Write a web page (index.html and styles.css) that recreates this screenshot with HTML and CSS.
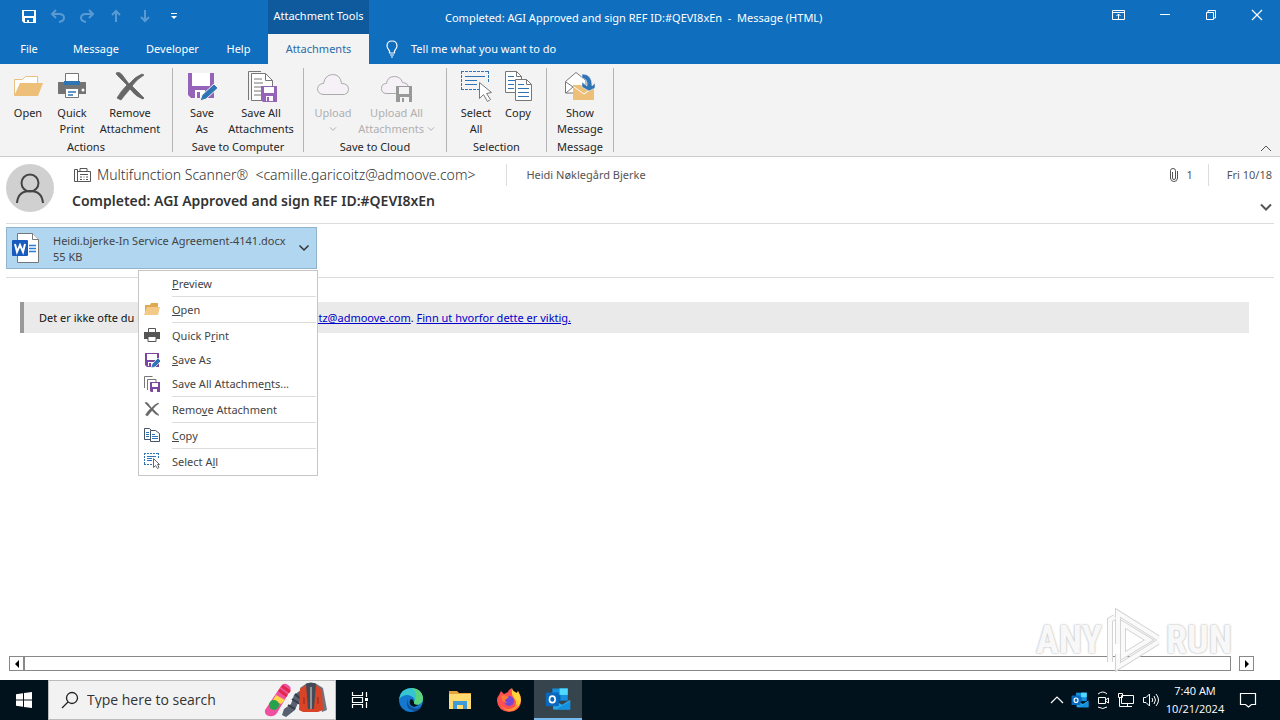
FILE: index.html
```html
<!DOCTYPE html>
<html lang="en">
<head>
<meta charset="utf-8">
<title>Completed: AGI Approved and sign REF ID:#QEVI8xEn - Message (HTML)</title>
<link rel="stylesheet" href="styles.css">
</head>
<body>
<svg class="sprite" aria-hidden="true">
  <symbol id="folder" viewBox="0 0 32 32"><path d="M2.500 25V9.500h8l3-3h12V15" fill="#fff" stroke="#e8c080"/><path d="M2 26l6-13h23l-5 13z" fill="#eebf78"/></symbol>
  <symbol id="folderfull" viewBox="0 0 16 16"><path d="M1 14V4h5l1-2h7v12z" fill="#e0a850"/><path d="M0 14l3-8h13l-2 8z" fill="#f3c987"/></symbol>
  <symbol id="printer" viewBox="0 0 32 32"><path d="M9.500 13V3.500h13V13" fill="#fff" stroke="#777"/><path d="M2 12h28v12H2z" fill="#737373"/><path d="M8 11h16v4H8z" fill="#2f74b5"/><circle cx="27" cy="20" r="1.500" fill="#fff"/><path d="M9.500 18.500h13v9h-13z" fill="#fff" stroke="#777"/><path d="M12 22h8M12 25h5" stroke="#2f74b5" stroke-width="1.500"/></symbol>
  <symbol id="cross" viewBox="0 0 32 32"><path d="M2 3q4-2 7 3l6 8q7-8 13-10l2 1q-7 4-12 11l12 12-1 1q-7-2-13-10-6 7-9 11l-4-2q4-7 10-13L3 5z" fill="#666" stroke="#666" stroke-width=".8"/></symbol>
  <symbol id="saveas" viewBox="0 0 32 32"><path d="M2 3h26v25H5l-3-3z" fill="#9563b8"/><path d="M6 3h18v13H6zM9 20h10v8H9z" fill="#fff"/><path d="M11 22h3v6h-3z" fill="#9563b8"/><path d="M14 31l2-6 12-11 4 4-12 11z" fill="#2f74b5" stroke="#f4f4f4"/></symbol>
  <symbol id="saveall" viewBox="0 0 32 32"><path d="M3.500 30V1.500H16" fill="none" stroke="#777"/><path d="M6.500 30.500v-27h14l7 7v20z" fill="#fff" stroke="#777"/><path d="M20.500 3.500v7h7M9 9h8M9 13h9M9 17h7M9 21h7M9 25h7" fill="none" stroke="#777"/><path d="M16 16h16v16H18l-2-2z" fill="#9563b8"/><path d="M19 17h10v6H19zM21 26h7v5h-7z" fill="#fff"/><path d="M22 27h2v4h-2z" fill="#9563b8"/></symbol>
  <symbol id="cloud" viewBox="0 0 32 32"><path d="M6 24.500q-5.500-1-5.500-6 1-5 6-5Q8 5 15.500 4.500q8 0 9 9 7 0 7 6 0 4-4 5z" fill="#f6f1f6" stroke="#aaa"/></symbol>
  <symbol id="clouddisk" viewBox="0 0 32 32"><path d="M15 23.500H5Q.500 23 .500 18.500q0-5 5-5 1-7 8-7 6 0 8 6 5 0 6 4" fill="#f6f1f6" stroke="#aaa"/><path d="M15 16h16v16H15z" fill="#999"/><path d="M18 17h10v7H18zM19 27h9v5h-9z" fill="#f4f4f4"/><path d="M21 28h2v4h-2z" fill="#999"/></symbol>
  <symbol id="selectall" viewBox="0 0 32 32"><path d="M1 1.500h28M1 19.500h18M1.500 1v19M28.500 1v12" fill="none" stroke="#2f74b5" stroke-dasharray="3 1"/><path d="M5 6.500h20M5 10.500h12M5 14.500h12" stroke="#2f74b5"/><path d="M19.500 12.500v16l4-4 4 7 3-2-4-6 5-1z" fill="#fff" stroke="#777"/></symbol>
  <symbol id="copy" viewBox="0 0 32 32"><path d="M3.500 1.500h11l5 5v16h-16z" fill="#fff" stroke="#777"/><path d="M14.500 1.500v5h5" fill="none" stroke="#777"/><path d="M6 6.500h6M6 10.500h7M6 14.500h6M6 18.500h6" stroke="#2f74b5"/><path d="M13.500 9.500h11l5 5v16h-16z" fill="#fff" stroke="#777"/><path d="M24.500 9.500v5h5" fill="none" stroke="#777"/><path d="M16 14.500h6M16 18.500h11M16 22.500h11M16 26.500h11" stroke="#2f74b5"/></symbol>
  <symbol id="envelope" viewBox="0 0 32 32"><path d="M1.500 23V11.500L12 2.500l10 8V23z" fill="#fff" stroke="#777"/><path d="M2 12l7 5M2 23l8-7" stroke="#777"/><path d="M9 15h21v15H9z" fill="#eebf78"/><path d="M10 17l10 7 10-7" fill="none" stroke="#fff"/><path d="M18 4q10 0 10 12l3-3v5l-6 3-7-4v-5l5 4Q24 9 18 8z" fill="#2f74b5" stroke="#f4f4f4" stroke-width=".5"/></symbol>
  <symbol id="chev" viewBox="0 0 12 12"><path d="M1.500 3.500L6 8l4.500-4.500" fill="none" stroke="currentColor" stroke-width="1.500"/></symbol>
  <symbol id="undo" viewBox="0 0 16 16"><path d="M6 2L2 6l4 4M2 6h7q5 0 5 4 0 3-5 4" fill="none" stroke="currentColor" stroke-width="2"/></symbol>
  <symbol id="arrow" viewBox="0 0 16 16"><path d="M8 14V3M4 7l4-4 4 4" fill="none" stroke="currentColor" stroke-width="2"/></symbol>
  <symbol id="outlook" viewBox="0 0 32 32"><path d="M9 3h19v15H9z" fill="#1490df"/><path d="M18 3h10v8H18z" fill="#50d9ff"/><path d="M9 11h10v8H9z" fill="#0364b8"/><path d="M10 17l11 6 10-6v12H10z" fill="#28a8ea"/><path d="M13 29l18-10v10z" fill="#1490df"/><rect x="1" y="8" width="16" height="17" rx="1" fill="#0a68bd"/><ellipse cx="9" cy="16.500" rx="3.500" ry="4" fill="none" stroke="#fff" stroke-width="2"/></symbol>
</svg>

<header class="top">
  <div class="titlebar">
    <div class="quick">
      <button class="plain" aria-label="Save"><svg width="16" height="16" viewBox="0 0 16 16"><path d="M1 2h14v13H3l-2-2zM3 3v5h10V3zM4 10v4h2v-2h2v2h4v-4z" fill="#fff" fill-rule="evenodd"/></svg></button>
      <button class="plain dim" aria-label="Undo"><svg width="16" height="16"><use href="#undo"/></svg></button>
      <button class="plain dim flip" aria-label="Redo"><svg width="16" height="16"><use href="#undo"/></svg></button>
      <button class="plain dim" aria-label="Previous item"><svg width="16" height="16"><use href="#arrow"/></svg></button>
      <button class="plain dim turn" aria-label="Next item"><svg width="16" height="16"><use href="#arrow"/></svg></button>
      <button class="plain" aria-label="Customize toolbar"><svg width="8" height="8" viewBox="0 0 8 8"><path d="M1 1.500h6" stroke="#fff"/><path d="M1 4h6L4 7z" fill="#fff"/></svg></button>
    </div>
    <div class="context">Attachment Tools</div>
    <div class="title">Completed: AGI Approved and sign REF ID:#QEVI8xEn &nbsp;-&nbsp; Message (HTML)</div>
    <div class="window">
      <button class="plain" aria-label="Ribbon display options"><svg width="14" height="12" viewBox="0 0 14 12"><path d="M.5 1.500h12v9H.5zM.5 3.500h12M6.500 10V5M4.500 7l2-2 2 2" fill="none" stroke="#fff"/></svg></button>
      <button class="plain" aria-label="Minimize"><svg width="12" height="12"><path d="M1 5.500h10" stroke="#fff"/></svg></button>
      <button class="plain" aria-label="Restore"><svg width="12" height="12"><path d="M1.500 3.500h7v7h-7zM3 3V1.500h7.500V9H9" fill="none" stroke="#fff"/></svg></button>
      <button class="plain" aria-label="Close"><svg width="12" height="12"><path d="M1 1l10 10M11 1L1 11" stroke="#fff" stroke-width="1.200"/></svg></button>
    </div>
  </div>
  <nav class="tabs">
    <button class="tab file">File</button>
    <button class="tab message">Message</button>
    <button class="tab developer">Developer</button>
    <button class="tab help">Help</button>
    <button class="tab active">Attachments</button>
    <button class="tab tell"><svg width="14" height="20" viewBox="0 0 14 20"><path d="M4.500 14v-2Q2 9 2 7q0-5 5-5t5 5q0 2-2.500 5v2zM5 16h4M6 18h2" fill="none" stroke="#fff" stroke-width="1.200"/></svg>Tell me what you want to do</button>
  </nav>
</header>

<section class="ribbon">
  <div class="group">
    <div class="tools snug">
      <button class="tool small"><svg><use href="#folder"/></svg>Open</button>
      <button class="tool small"><svg><use href="#printer"/></svg>Quick<br>Print</button>
      <button class="tool wide"><svg><use href="#cross"/></svg>Remove<br>Attachment</button>
    </div>
    <div class="name">Actions</div>
  </div>
  <div class="group">
    <div class="tools snug">
      <button class="tool"><svg><use href="#saveas"/></svg>Save<br>As</button>
      <button class="tool wide"><svg><use href="#saveall"/></svg>Save All<br>Attachments</button>
    </div>
    <div class="name">Save to Computer</div>
  </div>
  <div class="group">
    <div class="tools">
      <button class="tool" disabled><svg><use href="#cloud"/></svg>Upload<br><svg class="tiny"><use href="#chev"/></svg></button>
      <button class="tool widest" disabled><svg><use href="#clouddisk"/></svg>Upload All<br>Attachments <svg class="tiny"><use href="#chev"/></svg></button>
    </div>
    <div class="name">Save to Cloud</div>
  </div>
  <div class="group">
    <div class="tools">
      <button class="tool"><svg><use href="#selectall"/></svg>Select<br>All</button>
      <button class="tool narrow"><svg><use href="#copy"/></svg>Copy</button>
    </div>
    <div class="name">Selection</div>
  </div>
  <div class="group">
    <div class="tools snug">
      <button class="tool medium"><svg><use href="#envelope"/></svg>Show<br>Message</button>
    </div>
    <div class="name">Message</div>
  </div>
  <button class="plain collapse" aria-label="Collapse ribbon"><svg width="12" height="8"><path d="M1 7l5-5 5 5" fill="none" stroke="#555"/></svg></button>
</section>

<main class="mail">
  <div class="head">
    <svg class="avatar" viewBox="0 0 48 48"><circle cx="24" cy="24" r="24" fill="#d0d0d0"/><circle cx="24" cy="19" r="8.500" fill="none" stroke="#444" stroke-width="2"/><path d="M11 39q1-12 13-12t13 12" fill="none" stroke="#444" stroke-width="2"/></svg>
    <div class="who">
      <div class="from">
        <svg width="20" height="16" viewBox="0 0 20 16"><path d="M2.500 2.500h3v12h-3zM5.500 14.500v-10H8v-3h7v3h3.500v10zM8 4.500h8M8 7.500h8M8 10h2M11.500 10h1M14 10h2M8 12.500h2M11.500 12.500h1M14 12.500h2" fill="none" stroke="#555"/></svg>
        <span class="sender">Multifunction Scanner® &nbsp;&lt;camille.garicoitz@admoove.com&gt;</span>
        <span class="to">Heidi Nøklegård Bjerke</span>
      </div>
      <h1>Completed: AGI Approved and sign REF ID:#QEVI8xEn</h1>
    </div>
    <div class="meta">
      <div class="when">
        <svg width="10" height="16" viewBox="0 0 10 16"><path d="M3.500 5v6q0 1.500 1.500 1.500T6.500 11V3.500q0-2-2.500-2t-2.500 2V11q0 3.500 3.500 3.500T8.500 11V4" fill="none" stroke="#555"/></svg>
        <span class="count">1</span><span class="date">Fri 10/18</span>
      </div>
      <button class="plain expand" aria-label="Expand header"><svg width="12" height="12"><path d="M1 3.500l5 5 5-5" fill="none" stroke="#555" stroke-width="2"/></svg></button>
    </div>
  </div>

  <div class="attachments">
    <div class="holder">
      <button class="card">
        <svg width="28" height="32" viewBox="0 0 28 32"><path d="M5.500 1.500h15l6 6v23h-21z" fill="#fff" stroke="#777"/><path d="M20.500 1.500v6h6" fill="#fff" stroke="#777"/><path d="M17 13.500h7M17 16.500h7M17 19.500h7" stroke="#2b7cd3" stroke-width="1.500"/><rect x="0" y="8" width="16" height="16" rx="1" fill="#185abd"/><path d="M3 12l2 8 3-7 3 7 2-8" fill="none" stroke="#fff" stroke-width="2"/></svg>
        <span class="label"><span>Heidi.bjerke-In Service Agreement-4141.docx</span><span>55 KB</span></span>
        <svg class="drop"><use href="#chev"/></svg>
      </button>
      <div class="menu" role="menu">
        <button role="menuitem"><i></i><span><u>P</u>review</span></button>
        <button role="menuitem" class="line"><svg><use href="#folderfull"/></svg><span><u>O</u>pen</span></button>
        <button role="menuitem" class="line"><svg viewBox="0 0 16 16"><path d="M4.500 6V1.500h7V6" fill="#fff" stroke="#555"/><path d="M0 5h16v7H0z" fill="#555"/><path d="M4 9.500h8v5H4z" fill="#fff" stroke="#555"/></svg><span>Quick P<u>r</u>int</span></button>
        <button role="menuitem"><svg viewBox="0 0 16 16"><path d="M1 1h14v14H3l-2-2z" fill="#7c459f"/><path d="M3 2h10v6H3zM4 10h7v4H4z" fill="#fff"/><path d="M5 11h2v3H5z" fill="#7c459f"/><path d="M7 16l1-4 6-6 3 3-6 6z" fill="#2f74b5" stroke="#fff" stroke-width=".7"/></svg><span><u>S</u>ave As</span></button>
        <button role="menuitem"><svg viewBox="0 0 16 16"><path d="M.5 12V.5h8M3.500 14V3.500H12V6" fill="none" stroke="#777"/><path d="M6 6h10v10H7l-1-1z" fill="#7c459f"/><path d="M8 7h6v4H8zM9 13h4v3H9z" fill="#fff"/></svg><span>Save All Attachme<u>n</u>ts...</span></button>
        <button role="menuitem" class="line"><svg><use href="#cross"/></svg><span>Remo<u>v</u>e Attachment</span></button>
        <button role="menuitem" class="line"><svg viewBox="0 0 16 16"><path d="M.5 1.500h5l3 3v8h-8z" fill="#fff" stroke="#456"/><path d="M2 5.500h3M2 7.500h3M2 9.500h3" stroke="#2f74b5"/><path d="M6.500 3.500h5l4 3v8h-9z" fill="#fff" stroke="#456"/><path d="M8 7.500h3M8 9.500h6M8 11.500h6" stroke="#2f74b5"/></svg><span><u>C</u>opy</span></button>
        <button role="menuitem" class="line"><svg viewBox="0 0 16 16"><path d="M0 .5h15M0 11.500h9M.5 0v12M14.500 0v5" fill="none" stroke="#2f74b5" stroke-dasharray="2 1"/><path d="M3 3.500h9M3 5.500h5M3 7.500h5" stroke="#2f74b5"/><path d="M9.500 5.500v9l2-2 2 3 1.500-1-1.500-3h2z" fill="#fff" stroke="#666"/></svg><span>Select A<u>l</u>l</span></button>
      </div>
    </div>
  </div>

  <div class="content">
    <p class="notice">Det er ikke ofte du mottar en e-post fra <a href="#">camille.garicoitz@admoove.com</a>. <a href="#">Finn ut hvorfor dette er viktig.</a></p>
    <div class="scroll">
      <button aria-label="Scroll left"><svg width="6" height="8"><path d="M5 0v8L1 4z"/></svg></button>
      <div class="thumb"></div>
      <button class="right" aria-label="Scroll right"><svg width="6" height="8"><path d="M1 0v8l4-4z"/></svg></button>
    </div>
    <div class="watermark"><span>ANY</span><svg width="60" height="64" viewBox="0 0 60 64"><path d="M6 54V12l5-3M14 36V5l40 25M19 16l26 16-26 16zM14 46v13l40-25" fill="none" stroke="#d4d4d4" stroke-width="6"/><path d="M6 54V12l5-3M14 36V5l40 25M19 16l26 16-26 16zM14 46v13l40-25" fill="none" stroke="#fafafa" stroke-width="4"/></svg><span>RUN</span></div>
  </div>
</main>

<footer class="taskbar">
  <button class="plain start" aria-label="Start"><svg width="16" height="16"><path d="M0 2.300L7 1.300V7.500H0zM8 1.100L16 0v7.500H8zM0 8.500h7v6.200l-7-1zM8 8.500h8V16l-8-1.100z" fill="#fff"/></svg></button>
  <label class="search">
    <svg width="18" height="18" viewBox="0 0 18 18"><circle cx="11" cy="7" r="5.500" fill="none" stroke="#222" stroke-width="1.300"/><path d="M7 11l-6 6" stroke="#222" stroke-width="1.300"/></svg>
    <input type="text" placeholder="Type here to search" aria-label="Type here to search">
    <svg width="66" height="36" viewBox="0 0 66 36"><path d="M2 28L18 4q3-4 7-1 4 2 2 6L14 31q-3 4-8 3-5-1-4-6z" fill="#f050a0"/><path d="M19 4l8 6M16 8l8 6" stroke="#e02848" stroke-width="3"/><path d="M13 13l9 5-4 4-8-4z" fill="#ffd84a"/><circle cx="11" cy="23" r="5" fill="#24a34a"/><path d="M38 8l-7 5-3 9-7 5-2 6 4 2 9-7 3-7 8-5z" fill="#59606f"/><path d="M29 17l8 5M25 23l7 4M32 12l7 6" stroke="#353b48" stroke-width="2"/><path d="M37 6l7-5h8l8 5 4 22-5 2-3-12-1 11H40V18z" fill="#6c7382"/><path d="M37 7l6-4 5 3 5-3 6 5 1 20-5 2H40l-4-2z" fill="#d94326"/><path d="M43 2q5-3 10 0l-2 25h-6z" fill="#454a57"/><path d="M48 5v22" stroke="#ddd"/><path d="M41 15v7M55 15v7" stroke="#8b2b20"/></svg>
  </label>
  <button class="plain app first" aria-label="Task view"><svg width="18" height="18"><path d="M1.500 1v3.500h10V1M1.500 17v-3.500h10V17M1.500 6.500h10v5h-10zM15.500 1v5M15.500 11v6" fill="none" stroke="#fff" stroke-width="1.200"/><path d="M14 7h3v3h-3z" fill="#fff"/></svg></button>
  <button class="plain app" aria-label="Edge"><svg width="26" height="26" viewBox="0 0 26 26"><circle cx="13" cy="13" r="12" fill="#1478cf"/><path d="M1 12Q3 1 14 1q10 1 11 10 0 7-8 7-4-1-1-3 2-4-3-6Q7 6 1 12z" fill="#37c6d0"/><path d="M14 1q10 1 11 10 0 7-8 7-3-1-1-3 5-8-2-14z" fill="#5bd47d"/><path d="M10 12q-4 10 7 12 4 0 6-4-5 3-10 0-4-3-3-8z" fill="#124d96"/><path d="M16 15q-1 3 5 3l-5 2q-6-2-4-7 2-3 4 2z" fill="#02151e"/></svg></button>
  <button class="plain app" aria-label="File Explorer"><svg width="24" height="22" viewBox="0 0 24 22"><path d="M1 2h8l2 2h12v16H1z" fill="#e8a33d"/><path d="M1 5h22v15H1z" fill="#ffdb70"/><path d="M5 20v-8h14v8h-4v-4H9v4z" fill="#3f9bd8"/></svg></button>
  <button class="plain app" aria-label="Firefox"><svg width="26" height="26" viewBox="0 0 26 26"><path d="M3 8l2-4 3 3 4-2q1-3 4-4 0 3 5 5l1-2q3 5 3 9 0 11-12 12Q2 24 1 14q0-4 2-6z" fill="#ff4f4f"/><path d="M16 1q0 3 5 5l1-2q3 5 3 9-1 7-7 9 4-6 0-11-3-3-2-10z" fill="#ffd43b"/><path d="M5 16q2 7 9 6 8-2 7-9 3 10-7 11-7 0-9-8z" fill="#ff9830"/><circle cx="13" cy="14" r="5" fill="#7847d6"/><path d="M5 9q4-2 8 1l-4 3q0 3 4 3-7 1-8-7z" fill="#ff7a35"/></svg></button>
  <button class="plain app current" aria-label="Outlook"><svg width="26" height="26"><use href="#outlook"/></svg></button>
  <div class="tray">
    <svg width="14" height="10"><path d="M1 8l6-6 6 6" fill="none" stroke="#fff" stroke-width="1.200"/></svg>
    <svg width="18" height="18"><use href="#outlook"/></svg>
    <svg width="14" height="18"><path d="M2.500 6.500h7v6h-7zM9.500 9l3-2v5l-3-2M2 3q5-4 9 0M2 16q5 3 9 0" fill="none" stroke="#fff"/></svg>
    <svg width="18" height="16"><path d="M4.500 3.500h12v8h-12zM10.500 12v3M6 14.500h9M1.500 1.500h4v4h-4zM2.500 6v8.500H7" fill="none" stroke="#fff"/></svg>
    <svg width="18" height="16"><path d="M1.500 5.500H4L7.500 2v12L4 10.500H1.500zM10 6q1.500 2 0 4M12 4q3 4 0 8M14 2q5 6 0 12" fill="none" stroke="#fff"/></svg>
  </div>
  <div class="clock"><span>7:40 AM</span><span>10/21/2024</span></div>
  <button class="plain notify" aria-label="Notifications"><svg width="18" height="18"><path d="M1.500 2.500h15v11h-4L9.500 16l-3-2.500h-5z" fill="none" stroke="#fff" stroke-width="1.200"/></svg></button>
</footer>
</body>
</html>
```

FILE: styles.css
```css
* { box-sizing: border-box; }
body {
  margin: 0;
  min-height: 100vh;
  display: flex;
  flex-direction: column;
  font: 11px/16px "Noto Sans", "Open Sans", sans-serif;
  color: #333;
  background: #fff;
}
button, input { font: inherit; color: inherit; }
button { border: 0; padding: 0; background: none; white-space: nowrap; }
.sprite { position: absolute; width: 0; height: 0; }
.plain { display: flex; align-items: center; justify-content: center; }

.top { background: #106ebe; color: #fff; }
.titlebar { display: flex; height: 34px; }
.quick { width: 268px; display: flex; padding: 0 0 2px 14px; }
.quick .plain { width: 29px; }
.quick .dim { opacity: .3; }
.flip svg { transform: scaleX(-1); }
.turn svg { transform: rotate(180deg); }
.context { width: 101px; background: #0e5a9c; text-align: center; line-height: 32px; white-space: nowrap; }
.title { flex: 1; padding-left: 76px; line-height: 36px; white-space: nowrap; }
.window { display: flex; height: 30px; }
.window .plain { width: 46px; }
.tabs { display: flex; height: 30px; }
.tab { text-align: center; }
.file { width: 58px; }
.message { width: 76px; }
.developer { width: 77px; }
.help { width: 57px; padding-right: 2px; }
.active { width: 101px; background: #f3f3f3; color: #2b6ca8; }
.tell { display: flex; align-items: center; gap: 12px; padding-left: 16px; }

.ribbon { display: flex; height: 93px; padding: 4px 0; background: #f3f3f3; border-bottom: 1px solid #ccc; color: #262626; }
.group { display: flex; flex-direction: column; justify-content: space-between; border-right: 1px solid #b4b4b4; }
.tools { display: flex; align-items: flex-start; padding: 0 9px 0 6px; }
.tools.snug { padding-right: 6px; }
.tool { width: 46px; text-align: center; line-height: 16px; }
.tool > svg { display: block; width: 32px; height: 32px; margin: 2px auto 3px; }
.tool > svg.tiny { display: inline; width: 8px; height: 8px; margin: 0; }
.tool:disabled { color: #b0b0b0; }
.tool.small { width: 44px; }
.tool.narrow { width: 38px; }
.tool.wide { width: 72px; }
.tool.widest { width: 81px; }
.tool.medium { width: 54px; }
.name { text-align: center; line-height: 10px; }
.collapse { margin: auto 8px 0 auto; }

.mail { flex: 1; display: flex; flex-direction: column; }
.head { display: flex; margin: 0 6px; height: 67px; padding-top: 7px; border-bottom: 1px solid #ddd; }
.avatar { width: 48px; height: 48px; }
.who { flex: 1; padding-left: 18px; }
.from { display: flex; align-items: center; height: 22px; gap: 5px; }
.sender { font-size: 14px; font-weight: 300; padding-right: 26px; }
.to { border-left: 1px solid #ddd; padding-left: 19px; line-height: 22px; color: #555; }
h1 { margin: 5px 0 0; font-size: 14px; line-height: 20px; font-weight: 600; }
.meta { padding-right: 2px; color: #555; }
.when { display: flex; align-items: center; height: 22px; }
.count { padding: 0 15px 0 7px; }
.date { border-left: 1px solid #ddd; padding-left: 18px; line-height: 22px; }
.expand { margin: 15px 0 0 auto; }

.attachments { margin: 0 6px; padding: 3px 0 8px; border-bottom: 1px solid #ddd; }
.holder { position: relative; width: 311px; z-index: 1; }
.card { display: flex; align-items: center; width: 100%; height: 42px; padding: 0 6px 0 5px; border: 1px solid #8fb4cc; background: #b1d6f0; }
.label { flex: 1; display: flex; flex-direction: column; padding: 2px 0 0 13px; text-align: left; color: #444; }
.drop { width: 12px; height: 12px; }
.menu { position: absolute; left: 132px; top: 43px; width: 180px; padding: 1px 1px 1px 5px; border: 1px solid #c6c6c6; background: #fff; color: #444; }
.menu button { display: flex; align-items: center; gap: 12px; width: 100%; height: 24px; text-align: left; }
.menu svg, .menu i { width: 16px; height: 16px; }
.menu span { flex: 1; line-height: 24px; }
.menu .line { height: 26px; }
.menu .line span { border-top: 1px solid #ddd; line-height: 25px; }

.content { position: relative; flex: 1; display: flex; flex-direction: column; padding: 24px 26px 9px 9px; }
.notice { margin: 0 5px 0 11px; padding: 8px 15px 7px; border-left: 4px solid #999; background: #eaeaea; color: #111; }
.notice a { color: #0000c8; }
.scroll { display: flex; height: 15px; margin-top: auto; }
.scroll button { display: flex; align-items: center; justify-content: center; width: 15px; border: 1px solid #888; background: #fff; }
.thumb { flex: 1; border: 1px solid #888; }
.scroll .right { margin-left: 8px; }
.watermark { position: absolute; right: 48px; bottom: 8px; display: flex; align-items: center; gap: 2px; font: 700 38px/48px "Roboto Condensed", "Roboto", sans-serif; color: #f8f8f8; text-shadow: 0 0 2px #bbb, 0 0 2px #ccc; }

.taskbar { display: flex; height: 40px; background: #02121c; color: #fff; font-family: "Open Sans", sans-serif; }
.start { width: 48px; }
.search { display: flex; align-items: center; width: 288px; padding: 0 6px 0 12px; background: #f2f2f2; border: 1px solid #bbb; }
.search input { flex: 1; min-width: 0; padding: 0 0 0 8px; border: 0; outline: 0; background: none; font-size: 14px; }
.search input::placeholder { color: #333; opacity: 1; }
.app { width: 48px; margin-right: 1px; }
.first { margin-right: 3px; }
.current { background: #35444d; border-bottom: 2px solid #76b9ed; }
.tray { display: flex; align-items: center; gap: 7px; margin-left: auto; }
.clock { display: flex; flex-direction: column; justify-content: center; width: 70px; text-align: center; line-height: 18px; }
.notify { width: 36px; margin-right: 14px; }
```
